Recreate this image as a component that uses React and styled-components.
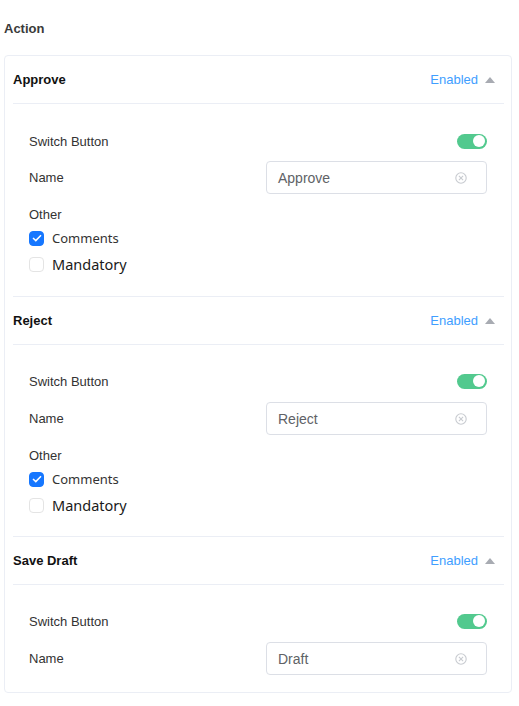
import React from "react";
import styled, { createGlobalStyle } from "styled-components";

const GlobalStyle = createGlobalStyle`
  html, body { margin: 0; padding: 0; background: #fff; }
  body { font-family: "Liberation Sans", Arial, sans-serif; }
  * { box-sizing: border-box; }
`;

const Page = styled.div`
  width: 508px;
  margin-left: 4px;
  padding-top: 20px;
`;

const Title = styled.div`
  font-size: 13px;
  font-weight: bold;
  line-height: 18px;
  color: #3a3a3a;
  margin-bottom: 17px;
`;

const Card = styled.div`
  border: 1px solid #ebeef5;
  border-radius: 4px;
  padding: 0 7px 0 8px;
`;

const Section = styled.div`
  & + & { border-top: 1px solid #ebeef5; }
`;

const Header = styled.div`
  height: 48px;
  display: flex;
  align-items: center;
  justify-content: space-between;
  border-bottom: 1px solid #ebeef5;
  padding-right: 9px;
`;

const HeaderTitle = styled.div`
  font-size: 13px;
  font-weight: bold;
  color: #111;
`;

const Status = styled.div`
  display: flex;
  align-items: center;
  gap: 7px;
  font-size: 13px;
  color: #409eff;
`;

const Caret = styled.span`
  width: 0;
  height: 0;
  border-left: 5px solid transparent;
  border-right: 5px solid transparent;
  border-bottom: 6px solid #a8abb2;
  margin-top: 1px;
`;

const Body = styled.div`
  padding: ${(p) => (p.$first ? "25px" : "24px")} 17px ${(p) => p.$pb}px 16px;
`;

const Row = styled.div`
  display: flex;
  align-items: center;
  justify-content: space-between;
  height: ${(p) => p.$h}px;
  margin-bottom: ${(p) => p.$mb || 0}px;
`;

const Label = styled.div`
  font-size: 13px;
  color: #333;
`;

const Switch = styled.div`
  width: 30px;
  height: 15px;
  border-radius: 8px;
  background: #52c98e;
  position: relative;
  &::after {
    content: "";
    position: absolute;
    right: 2px;
    top: 1.5px;
    width: 12px;
    height: 12px;
    border-radius: 50%;
    background: #fff;
  }
`;

const InputBox = styled.div`
  width: 221px;
  height: 33px;
  border: 1px solid #dcdfe6;
  border-radius: 4px;
  display: flex;
  align-items: center;
  justify-content: space-between;
  padding: 0 19px 0 11px;
  font-size: 14px;
  color: #606266;
`;

const OtherLabel = styled.div`
  font-size: 13px;
  line-height: 20px;
  color: #333;
  margin-top: 11px;
  margin-bottom: 1px;
`;

const CheckRow = styled.label`
  display: flex;
  align-items: center;
  gap: 8px;
  height: 24px;
  font-family: "Noto Sans", "Open Sans", sans-serif;
  font-size: ${(p) => (p.$big ? "14.5px" : "13px")};
  color: ${(p) => (p.$big ? "#1a1a1a" : "#333")};
  & + & { margin-top: 2px; }
`;

const Box = styled.span`
  width: 15px;
  height: 15px;
  border-radius: 4px;
  display: flex;
  align-items: center;
  justify-content: center;
  background: ${(p) => (p.$on ? "#1677ff" : "#fff")};
  border: 1px solid ${(p) => (p.$on ? "#1677ff" : "#e4e4e4")};
`;

const ClearIcon = () => (
  <svg width="12" height="12" viewBox="0 0 12 12" fill="none" stroke="#c8cbd0" strokeWidth="1.1">
    <circle cx="6" cy="6" r="5.2" />
    <path d="M3.9 3.9l4.2 4.2M8.1 3.9l-4.2 4.2" />
  </svg>
);

const Check = () => (
  <svg width="10" height="8" viewBox="0 0 10 8" fill="none" stroke="#fff" strokeWidth="1.5">
    <path d="M1 4l2.8 2.6L9 1.2" />
  </svg>
);

const sections = [
  { title: "Approve", name: "Approve", other: true, pb: 20 },
  { title: "Reject", name: "Reject", other: true, pb: 19 },
  { title: "Save Draft", name: "Draft", other: false, pb: 17 },
];

export default function App() {
  return (
    <>
      <GlobalStyle />
      <Page>
        <Title>Action</Title>
        <Card>
          {sections.map((s, i) => (
            <Section key={s.title}>
              <Header>
                <HeaderTitle>{s.title}</HeaderTitle>
                <Status>
                  Enabled
                  <Caret />
                </Status>
              </Header>
              <Body $first={i === 0} $pb={s.pb}>
                <Row $h={24} $mb={i === 0 ? 8 : 9}>
                  <Label>Switch Button</Label>
                  <Switch />
                </Row>
                <Row $h={33}>
                  <Label>Name</Label>
                  <InputBox>
                    {s.name}
                    <ClearIcon />
                  </InputBox>
                </Row>
                {s.other && (
                  <>
                    <OtherLabel>Other</OtherLabel>
                    <CheckRow>
                      <Box $on>
                        <Check />
                      </Box>
                      Comments
                    </CheckRow>
                    <CheckRow $big>
                      <Box />
                      Mandatory
                    </CheckRow>
                  </>
                )}
              </Body>
            </Section>
          ))}
        </Card>
      </Page>
    </>
  );
}
